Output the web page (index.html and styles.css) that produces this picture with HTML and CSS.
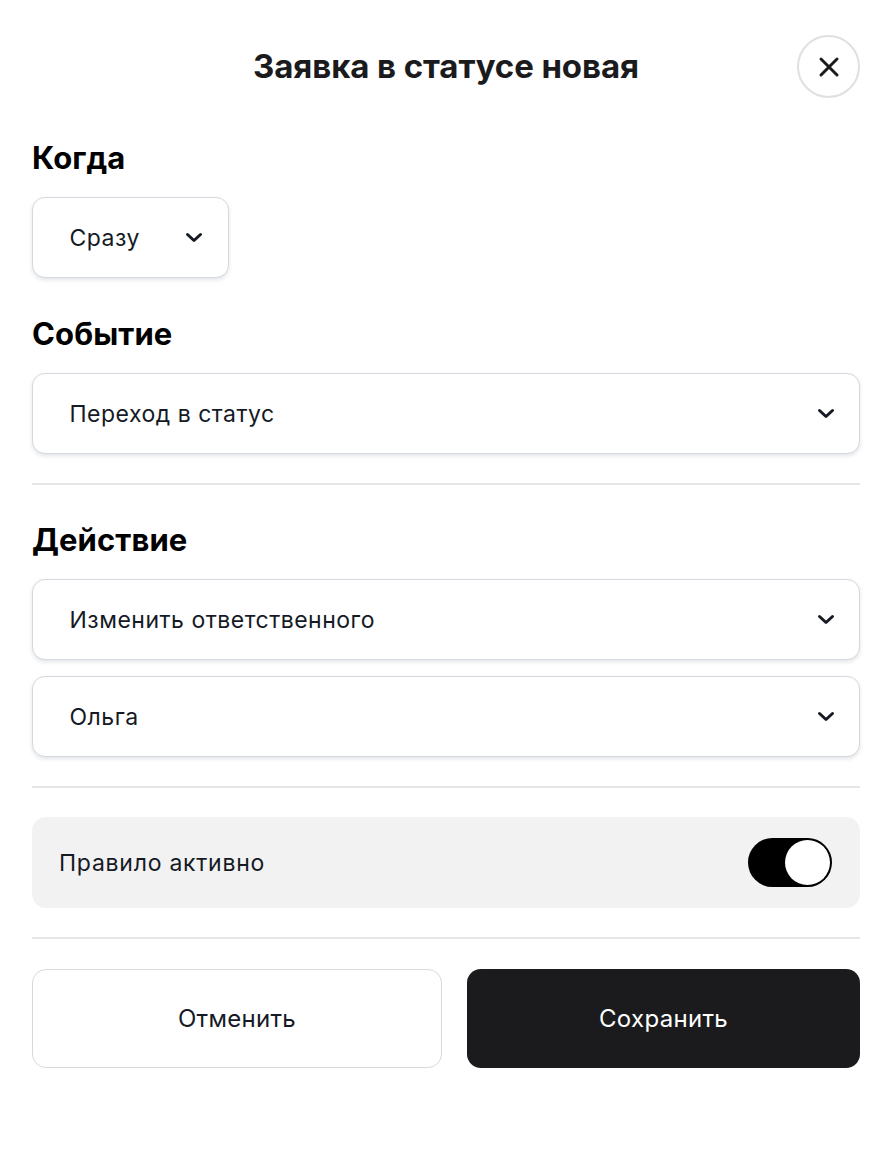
FILE: index.html
```html
<!DOCTYPE html>
<html lang="ru">
<head>
<meta charset="utf-8">
<link rel="stylesheet" href="styles.css">
</head>
<body>
<div class="modal">
  <header class="head">
    <h1 class="title">Заявка в статусе новая</h1>
    <button class="close" aria-label="Закрыть">
      <svg width="22" height="22" viewBox="0 0 22 22"><path d="M3 3L19 19M19 3L3 19" stroke="#1b1b1d" stroke-width="3" stroke-linecap="round"/></svg>
    </button>
  </header>

  <section class="sect first">
    <h2 class="label">Когда</h2>
    <div class="select small"><span>Сразу</span><svg class="chev" width="18" height="11" viewBox="0 0 18 11"><path d="M2.5 2.5L9 8.5L15.5 2.5" fill="none" stroke="#151a25" stroke-width="3" stroke-linecap="round" stroke-linejoin="round"/></svg></div>
  </section>

  <section class="sect">
    <h2 class="label">Событие</h2>
    <div class="select"><span>Переход в статус</span><svg class="chev" width="18" height="11" viewBox="0 0 18 11"><path d="M2.5 2.5L9 8.5L15.5 2.5" fill="none" stroke="#151a25" stroke-width="3" stroke-linecap="round" stroke-linejoin="round"/></svg></div>
  </section>

  <hr class="divider">

  <section class="sect after-div">
    <h2 class="label">Действие</h2>
    <div class="stack">
      <div class="select"><span>Изменить ответственного</span><svg class="chev" width="18" height="11" viewBox="0 0 18 11"><path d="M2.5 2.5L9 8.5L15.5 2.5" fill="none" stroke="#151a25" stroke-width="3" stroke-linecap="round" stroke-linejoin="round"/></svg></div>
      <div class="select"><span>Ольга</span><svg class="chev" width="18" height="11" viewBox="0 0 18 11"><path d="M2.5 2.5L9 8.5L15.5 2.5" fill="none" stroke="#151a25" stroke-width="3" stroke-linecap="round" stroke-linejoin="round"/></svg></div>
    </div>
  </section>

  <hr class="divider">

  <div class="toggle-row">
    <span>Правило активно</span>
    <span class="toggle"><span class="knob"></span></span>
  </div>

  <hr class="divider">

  <div class="actions">
    <button class="btn cancel">Отменить</button>
    <button class="btn save">Сохранить</button>
  </div>
</div>
</body>
</html>
```

FILE: styles.css
```css
* { box-sizing: border-box; }
html, body { margin: 0; padding: 0; background: #fff; }
body {
  font-family: Inter, "Noto Sans", sans-serif;
  color: #151a25;
}
.modal {
  width: 892px;
  padding: 35px 32px 0;
  display: flex;
  flex-direction: column;
}
.head {
  position: relative;
  height: 62px;
  display: flex;
  align-items: center;
  justify-content: center;
}
.title {
  margin: 0;
  font-size: 33px;
  font-weight: 700;
  letter-spacing: -0.1px;
  color: #1b1b1d;
}
.close {
  position: absolute;
  right: 0;
  top: 0;
  width: 63px;
  height: 63px;
  border-radius: 50%;
  border: 2px solid #e0e0e0;
  background: #fff;
  display: flex;
  align-items: center;
  justify-content: center;
  padding: 0;
}
.sect { display: flex; flex-direction: column; gap: 21px; margin-top: 38px; }
.sect.first { margin-top: 43px; }
.sect.after-div { margin-top: 37px; }
.label {
  margin: 0;
  font-size: 31px;
  line-height: 36px;
  font-weight: 700;
  color: #000;
  letter-spacing: 0.1px;
}
.stack { display: flex; flex-direction: column; gap: 16px; }
.select {
  height: 81px;
  border: 1.5px solid #d5d8de;
  border-radius: 13px;
  box-shadow: 0 2px 4px rgba(20, 30, 50, 0.12);
  display: flex;
  align-items: center;
  justify-content: space-between;
  padding: 0 24px 0 36.5px;
  font-size: 23px;
  letter-spacing: 0.5px;
  color: #151a25;
  background: #fff;
}
.select.small { width: 197px; padding-right: 25px; }
.chev { flex: none; }
.divider {
  margin: 29px 0 0;
  border: 0;
  height: 2px;
  background: #e6e6e6;
}
.toggle-row {
  margin-top: 29px;
  height: 91px;
  background: #f2f2f2;
  border-radius: 14px;
  display: flex;
  align-items: center;
  justify-content: space-between;
  padding: 0 28px 0 27px;
  font-size: 23px;
  letter-spacing: 0.75px;
  color: #151a25;
}
.toggle {
  width: 84px;
  height: 49px;
  border-radius: 25px;
  background: #000;
  display: flex;
  align-items: center;
  justify-content: flex-end;
  padding: 2px;
}
.knob {
  width: 45px;
  height: 45px;
  border-radius: 50%;
  background: #fff;
}
.actions {
  margin-top: 30px;
  display: grid;
  grid-template-columns: 410px 1fr;
  gap: 25px;
}
.btn {
  height: 99px;
  border-radius: 14px;
  font-family: inherit;
  font-size: 24px;
  letter-spacing: 0.3px;
  padding: 0;
}
.cancel { background: #fff; border: 1.5px solid #d9d9d9; color: #151a25; }
.save { background: #1b1b1d; border: 0; color: #fff; }
```
